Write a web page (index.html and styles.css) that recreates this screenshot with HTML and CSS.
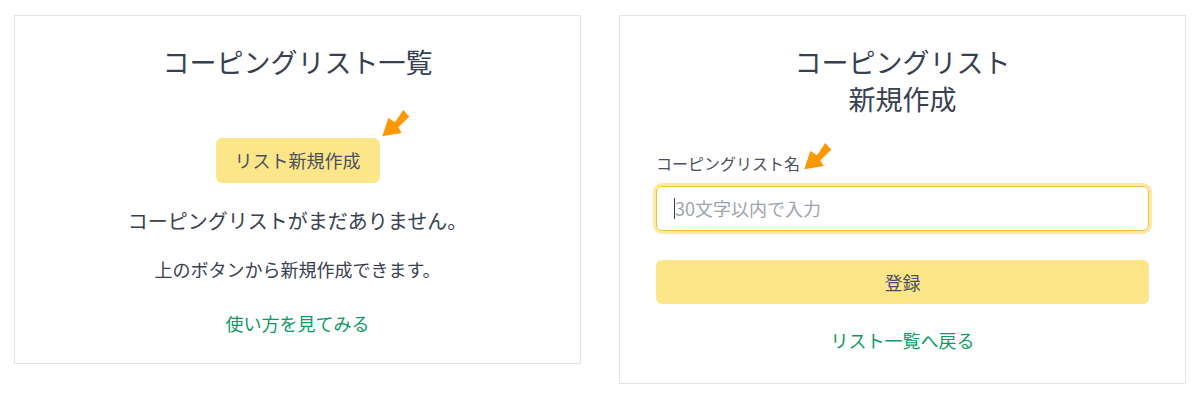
FILE: index.html
```html
<!DOCTYPE html>
<html lang="ja">
<head>
<meta charset="utf-8">
<title>コーピングリスト</title>
<link rel="stylesheet" href="styles.css">
</head>
<body>
<div class="page">
  <section class="card card-list">
    <h1 class="title">コーピングリスト一覧</h1>
    <div class="btn-wrap">
      <button class="btn-new">リスト新規作成</button>
      <svg class="arrow arrow-btn" width="30" height="30" viewBox="0 0 30 30"><polygon points="1.3,28.3 7.3,10 14,14.3 22.3,2 28.3,8.7 17.3,19.3 20.7,25" fill="#ff9800"/></svg>
    </div>
    <p class="empty">コーピングリストがまだありません。</p>
    <p class="hint">上のボタンから新規作成できます。</p>
    <a class="link link-howto" href="#">使い方を見てみる</a>
  </section>
  <section class="card card-form">
    <h1 class="title">コーピングリスト<br>新規作成</h1>
    <div class="field">
      <label class="label" for="name">コーピングリスト名<svg class="arrow arrow-label" width="30" height="30" viewBox="0 0 30 30"><polygon points="1.3,28.3 7.3,10 14,14.3 22.3,2 28.3,8.7 17.3,19.3 20.7,25" fill="#ff9800"/></svg></label>
      <div class="input"><span class="caret"></span><span class="placeholder">30文字以内で入力</span></div>
    </div>
    <button class="btn-submit">登録</button>
    <a class="link link-back" href="#">リスト一覧へ戻る</a>
  </section>
</div>
</body>
</html>
```
FILE: styles.css
```css
* { box-sizing: border-box; }
html, body { margin: 0; padding: 0; background: #fff; }
body {
  font-family: "Noto Sans CJK JP", "Noto Sans", sans-serif;
  color: #374151;
}
.page {
  display: flex;
  align-items: flex-start;
  gap: 38px;
  padding: 15px 0 0 14px;
}
.card {
  width: 567px;
  border: 1px solid #e3e3e3;
  display: flex;
  flex-direction: column;
  align-items: center;
  background: #fff;
}
.card-list { height: 349px; padding-top: 27px; }
.card-form { height: 369px; padding: 27px 36px 0; align-items: stretch; }
.title {
  margin: 0;
  font-size: 27px;
  line-height: 37px;
  font-weight: 400;
  text-align: center;
  color: #374151;
}
.btn-wrap { position: relative; margin-top: 58px; }
.btn-new, .btn-submit {
  font-family: inherit;
  font-size: 18px;
  line-height: 27px;
  color: #4b5060;
  background: #fde68a;
  border: none;
  border-radius: 6px;
}
.btn-new { padding: 9px 19px; width: 164px; height: 45px; }
.arrow { position: absolute; }
.arrow-btn { left: calc(100% + 1px); top: -30px; }
.empty {
  margin: 23px 0 0;
  font-size: 20px;
  line-height: 30px;
}
.hint {
  margin: 20px 0 0;
  font-size: 18px;
  line-height: 27px;
}
.link {
  font-size: 18px;
  line-height: 27px;
  color: #0e9a63;
  text-decoration: none;
  text-align: center;
}
.link-howto { margin-top: 27px; }
.field { margin-top: 34px; }
.label {
  position: relative;
  display: inline-block;
  font-size: 16px;
  line-height: 24px;
  color: #4b5060;
}
.arrow-label { left: calc(100% + 3px); top: -10px; }
.input {
  margin-top: 11px;
  height: 45px;
  border: 1px solid #f4bd3a;
  border-radius: 6px;
  box-shadow: 0 0 0 3px #fde9a6;
  display: flex;
  align-items: center;
  padding-left: 17px;
}
.caret {
  width: 1px;
  height: 21px;
  background: #374151;
}
.placeholder {
  font-size: 18px;
  line-height: 27px;
  color: #9ca3af;
}
.btn-submit {
  margin-top: 29px;
  height: 44px;
  width: 100%;
}
.link-back { margin-top: 23px; }
```
